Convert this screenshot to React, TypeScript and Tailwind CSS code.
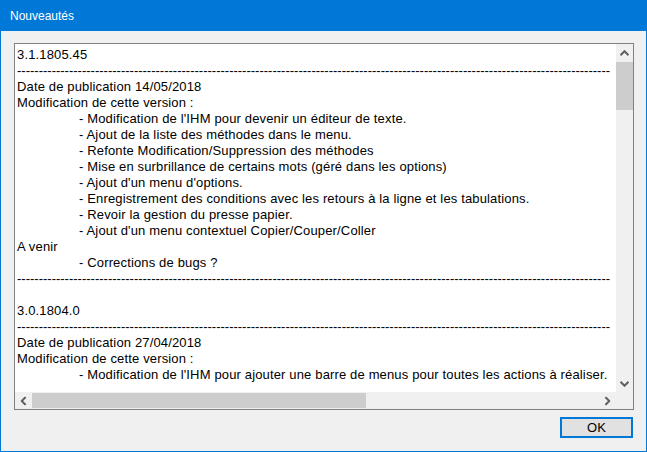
const dashes = '-'.repeat(137)

const notes: { text: string; indent?: boolean; dash?: boolean }[] = [
  { text: '3.1.1805.45' },
  { text: dashes, dash: true },
  { text: 'Date de publication 14/05/2018' },
  { text: 'Modification de cette version :' },
  { text: "- Modification de l'IHM pour devenir un éditeur de texte.", indent: true },
  { text: '- Ajout de la liste des méthodes dans le menu.', indent: true },
  { text: '- Refonte Modification/Suppression des méthodes', indent: true },
  { text: '- Mise en surbrillance de certains mots (géré dans les options)', indent: true },
  { text: "- Ajout d'un menu d'options.", indent: true },
  { text: '- Enregistrement des conditions avec les retours à la ligne et les tabulations.', indent: true },
  { text: '- Revoir la gestion du presse papier.', indent: true },
  { text: "- Ajout d'un menu contextuel Copier/Couper/Coller", indent: true },
  { text: 'A venir' },
  { text: '- Corrections de bugs ?', indent: true },
  { text: dashes, dash: true },
  { text: '\u00a0' },
  { text: '3.0.1804.0' },
  { text: dashes, dash: true },
  { text: 'Date de publication 27/04/2018' },
  { text: 'Modification de cette version :' },
  { text: "- Modification de l'IHM pour ajouter une barre de menus pour toutes les actions à réaliser.", indent: true },
]

const Chevron = ({ dir }: { dir: 'up' | 'down' | 'left' | 'right' }) => {
  const rot = { up: 0, right: 90, down: 180, left: 270 }[dir]
  return (
    <svg width="9" height="6" viewBox="0 0 9 6" style={{ transform: `rotate(${rot}deg)` }}>
      <path d="M0.5 5.2 L4.5 1.2 L8.5 5.2" fill="none" stroke="#606060" strokeWidth="2" />
    </svg>
  )
}

export default function App() {
  return (
    <div className="w-[647px] h-[452px] flex flex-col bg-[#0078d7] font-['Liberation_Sans',Arial,sans-serif]">
      <div className="h-[31px] shrink-0 flex items-center pl-[10px] text-[12px] text-white">
        Nouveautés
      </div>
      <div className="flex-1 mx-[1px] mb-[1px] bg-[#f0f0f0] flex flex-col pt-[12px] pl-[13px]">
        <div className="w-[620px] h-[367px] border border-[#828282] bg-white flex flex-col">
          <div className="flex flex-1 min-h-0">
            <div className="flex-1 min-w-0 overflow-hidden pl-[2px] pr-[2px] pt-[3px]">
              <div className="text-[13px] leading-[16px] text-black whitespace-nowrap">
                {notes.map((n, i) => (
                  <div key={i} className={n.indent ? 'pl-[62px] tracking-[0.15px]' : n.dash ? '' : 'tracking-[0.15px]'}>
                    {n.text}
                  </div>
                ))}
              </div>
            </div>
            <div className="w-[17px] shrink-0 bg-[#f0f0f0] flex flex-col">
              <div className="h-[17px] flex items-center justify-center">
                <Chevron dir="up" />
              </div>
              <div className="flex-1 pt-[1px]">
                <div className="h-[48px] bg-[#cdcdcd]" />
              </div>
              <div className="h-[17px] flex items-center justify-center">
                <Chevron dir="down" />
              </div>
            </div>
          </div>
          <div className="h-[17px] shrink-0 flex bg-[#f0f0f0]">
            <div className="w-[17px] flex items-center justify-center">
              <Chevron dir="left" />
            </div>
            <div className="flex-1 flex items-stretch py-[1px]">
              <div className="w-[334px] bg-[#cdcdcd]" />
            </div>
            <div className="w-[17px] flex items-center justify-center">
              <Chevron dir="right" />
            </div>
            <div className="w-[17px]" />
          </div>
        </div>
        <div className="w-[620px] flex justify-end pt-[7px]">
          <button className="w-[73px] h-[21px] border-2 border-[#0078d7] bg-[#e1e1e1] text-[13px] text-black flex items-center justify-center mr-[1px]">
            OK
          </button>
        </div>
      </div>
    </div>
  )
}
